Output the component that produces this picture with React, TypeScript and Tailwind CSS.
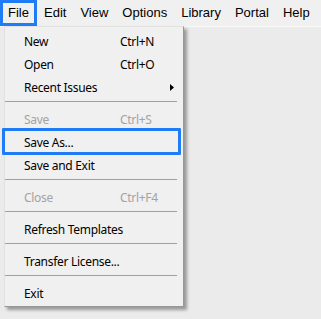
import React from "react";

const MENU_BAR = ["Edit", "View", "Options", "Library", "Portal", "Help"];

type Item =
  | { kind: "sep" }
  | {
      kind: "item";
      label: string;
      shortcut?: string;
      disabled?: boolean;
      submenu?: boolean;
      highlight?: boolean;
    };

const FILE_MENU: Item[] = [
  { kind: "item", label: "New", shortcut: "Ctrl+N" },
  { kind: "item", label: "Open", shortcut: "Ctrl+O" },
  { kind: "item", label: "Recent Issues", submenu: true },
  { kind: "sep" },
  { kind: "item", label: "Save", shortcut: "Ctrl+S", disabled: true },
  { kind: "item", label: "Save As...", highlight: true },
  { kind: "item", label: "Save and Exit" },
  { kind: "sep" },
  { kind: "item", label: "Close", shortcut: "Ctrl+F4", disabled: true },
  { kind: "sep" },
  { kind: "item", label: "Refresh Templates" },
  { kind: "sep" },
  { kind: "item", label: "Transfer License..." },
  { kind: "sep" },
  { kind: "item", label: "Exit" },
];

export default function App() {
  return (
    <div className="relative h-[319px] w-[321px] overflow-hidden bg-[#ebebeb]">
      {/* Menu bar */}
      <div
        className="flex h-[26px] items-stretch bg-[#f0f0f0] text-[13px] text-black"
        style={{ fontFamily: '"Liberation Sans", Arial, sans-serif' }}
      >
        <div className="flex w-[37px] items-center border-[3px] border-[#1f7cf6] pl-[5px]">
          File
        </div>
        {MENU_BAR.map((m) => (
          <div key={m} className="flex items-center px-[7px]">
            {m}
          </div>
        ))}
      </div>
      <div className="h-px bg-[#f8f8f8]" />

      {/* File dropdown */}
      <div
        className="absolute left-[4px] top-[26px] w-[180px] border border-[#979797] border-l-[#e2e2e2] border-t-[#e2e2e2] bg-[#f0f0f0] pb-[1px] pt-[3px] text-[12px] tracking-[-0.3px] text-black shadow-[3px_3px_3px_rgba(0,0,0,0.35)]"
        style={{ fontFamily: '"Noto Sans", "Open Sans", sans-serif' }}
      >
        {FILE_MENU.map((item, i) =>
          item.kind === "sep" ? (
            <div key={i} className="h-[9px] pt-[2px]">
              <div className="mr-[6px] h-px bg-[#a0a0a0]" />
            </div>
          ) : (
            <div
              key={i}
              className={`relative flex h-[23px] items-center whitespace-nowrap pl-[19px] ${
                item.disabled ? "text-[#a3a3a3]" : ""
              }`}
            >
              <span className="min-w-[96px] shrink-0">{item.label}</span>
              {item.shortcut && <span>{item.shortcut}</span>}
              {item.submenu && (
                <svg
                  className="absolute left-[165px] top-[8px]"
                  width="4"
                  height="7"
                  viewBox="0 0 4 7"
                >
                  <path d="M0 0 L4 3.5 L0 7 Z" fill="#000" />
                </svg>
              )}
              {item.highlight && (
                <div className="absolute -top-[3px] bottom-[-1px] left-[-3px] w-[179px] rounded-[1px] border-[3px] border-[#1f7cf6]" />
              )}
            </div>
          )
        )}
      </div>
    </div>
  );
}
